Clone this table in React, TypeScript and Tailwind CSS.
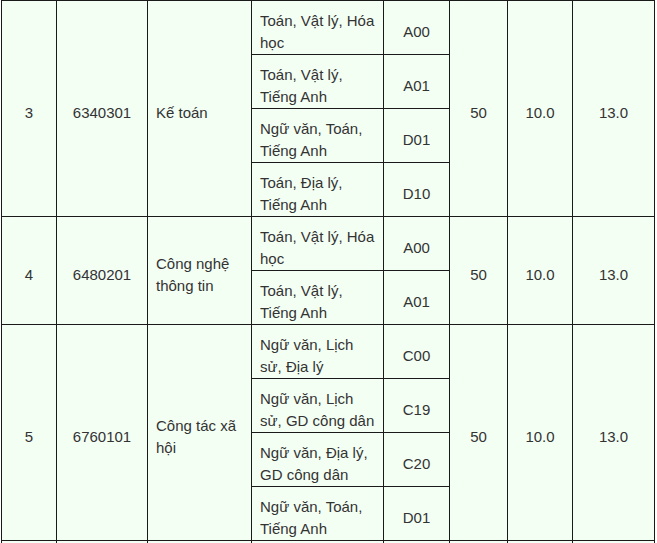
import React from "react";

type Sub = { s: string; c: string };
type Row = { n: string; code: string; name: string; subs: Sub[]; q: string; a: string; b: string };

const rows: Row[] = [
  {
    n: "3",
    code: "6340301",
    name: "Kế toán",
    subs: [
      { s: "Toán, Vật lý, Hóa học", c: "A00" },
      { s: "Toán, Vật lý, Tiếng Anh", c: "A01" },
      { s: "Ngữ văn, Toán, Tiếng Anh", c: "D01" },
      { s: "Toán, Địa lý, Tiếng Anh", c: "D10" },
    ],
    q: "50",
    a: "10.0",
    b: "13.0",
  },
  {
    n: "4",
    code: "6480201",
    name: "Công nghệ thông tin",
    subs: [
      { s: "Toán, Vật lý, Hóa học", c: "A00" },
      { s: "Toán, Vật lý, Tiếng Anh", c: "A01" },
    ],
    q: "50",
    a: "10.0",
    b: "13.0",
  },
  {
    n: "5",
    code: "6760101",
    name: "Công tác xã hội",
    subs: [
      { s: "Ngữ văn, Lịch sử, Địa lý", c: "C00" },
      { s: "Ngữ văn, Lịch sử, GD công dân", c: "C19" },
      { s: "Ngữ văn, Địa lý, GD công dân", c: "C20" },
      { s: "Ngữ văn, Toán, Tiếng Anh", c: "D01" },
    ],
    q: "50",
    a: "10.0",
    b: "13.0",
  },
  {
    n: "",
    code: "",
    name: "",
    subs: [{ s: "", c: "" }],
    q: "",
    a: "",
    b: "",
  },
];

const cell = "border border-[#1a1a1a] align-middle pt-[9px] pb-0";

export default function App() {
  return (
    <div
      className="h-[543px] w-[657px] overflow-hidden bg-white"
      style={{ fontFamily: '"Liberation Sans", Arial, sans-serif' }}
    >
      <table className="ml-px table-fixed border-collapse bg-[#f4fff4] text-[15px] leading-[22px] text-[#333]">
        <colgroup>
          <col className="w-[55px]" />
          <col className="w-[91px]" />
          <col className="w-[104px]" />
          <col className="w-[132px]" />
          <col className="w-[66px]" />
          <col className="w-[58px]" />
          <col className="w-[65px]" />
          <col className="w-[82px]" />
        </colgroup>
        <tbody>
          {rows.map((r, ri) =>
            r.subs.map((sub, i) => (
              <tr key={ri + "-" + i} className="h-[54px]">
                {i === 0 && (
                  <>
                    <td rowSpan={r.subs.length} className={`${cell} px-0 text-center`}>
                      {r.n}
                    </td>
                    <td rowSpan={r.subs.length} className={`${cell} px-0 text-center`}>
                      {r.code}
                    </td>
                    <td rowSpan={r.subs.length} className={`${cell} px-2 text-left`}>
                      {r.name}
                    </td>
                  </>
                )}
                <td className={`${cell} px-2 text-left`}>{sub.s}</td>
                <td className={`${cell} px-0 text-center`}>{sub.c}</td>
                {i === 0 && (
                  <>
                    <td rowSpan={r.subs.length} className={`${cell} px-0 text-center`}>
                      {r.q}
                    </td>
                    <td rowSpan={r.subs.length} className={`${cell} px-0 text-center`}>
                      {r.a}
                    </td>
                    <td rowSpan={r.subs.length} className={`${cell} px-0 text-center`}>
                      {r.b}
                    </td>
                  </>
                )}
              </tr>
            ))
          )}
        </tbody>
      </table>
    </div>
  );
}
